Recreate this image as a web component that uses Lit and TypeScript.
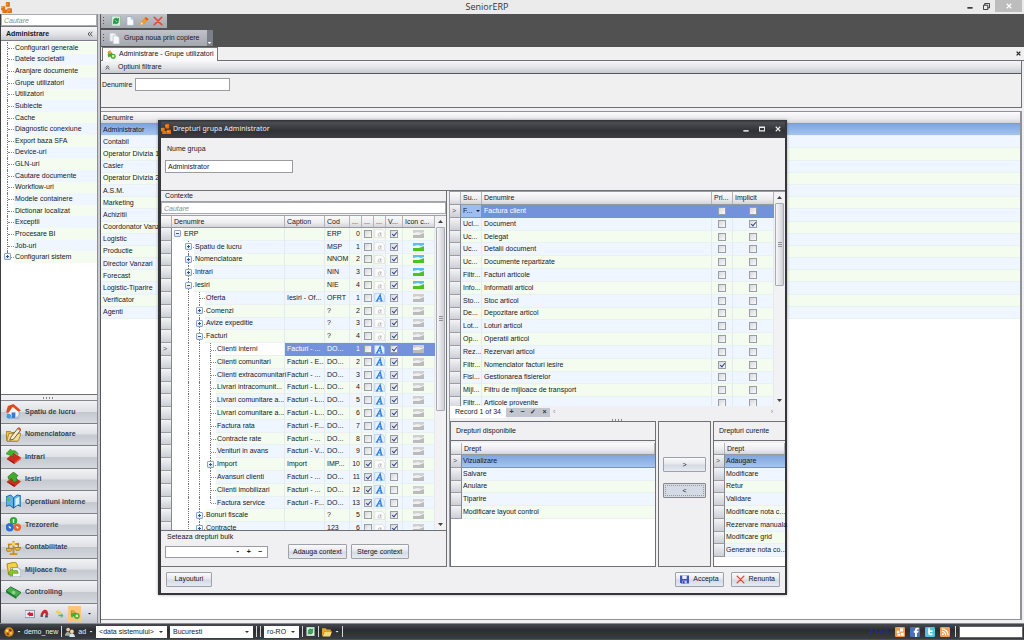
import { LitElement, html, svg, css, nothing } from "lit";
import { customElement } from "lit/decorators.js";
import { classMap } from "lit/directives/class-map.js";
import { styleMap } from "lit/directives/style-map.js";

const icon = (size: number, body: unknown, box = 16) =>
  html`<svg class="icon" width=${size} height=${size} viewBox="0 0 ${box} ${box}" aria-hidden="true">${body}</svg>`;

const ICONS: Record<string, unknown> = {
  brand: svg`<g fill="#e8720c"><rect x="7" y="0" width="6" height="7" rx="1"/><rect x="0" y="6" width="6" height="6" rx="1"/><rect x="9" y="9" width="7" height="7" rx="1"/><rect x="2" y="11" width="7" height="5" rx="1"/></g><path d="M7 3h3M0 8h3M10 12h3" stroke="#f9a750" stroke-width="1.5"/>`,
  refresh: svg`<rect x="1" y="0" width="14" height="16" rx="1" fill="#d9efe0" stroke="#8aa79a"/><path d="M4 7a4 4 0 0 1 7-2l1-2v5H8l1.500-1.500A2.500 2.500 0 0 0 6 7zM12 9a4 4 0 0 1-7 2l-1 2V8h4l-1.500 1.500A2.500 2.500 0 0 0 10 9z" fill="#1e9440" stroke="#1e9440"/>`,
  page: svg`<path d="M3 1h7l4 4v10H3z" fill="#fbfdff" stroke="#8ea3c0"/><path d="M10 1v4h4" fill="#cfe0f5" stroke="#8ea3c0"/>`,
  pages: svg`<path d="M1 0h7l3 3v9H1z" fill="#eef1f5" stroke="#b9bfc8"/><path d="M6 4h6l3 3v9H6z" fill="#f7f8fa" stroke="#b9bfc8"/>`,
  pencil: svg`<path d="M2 14l2-5 7-7 4 3-8 8z" fill="#f29a2e" stroke="#e08a24"/><path d="M2 14l2-5 3 4z" fill="#f7dfb8"/><path d="M11 2l4 3-2 2-4-3z" fill="#e3561c"/>`,
  cross: svg`<path d="M2 2l12 12M14 2L2 14" stroke="#e8452a" stroke-width="2.500" stroke-linecap="round"/>`,
  users: svg`<path d="M1 4c3-4 6-2 6 0l7 6c2 3-1 6-4 5L3 9z" fill="#39a431"/><circle cx="5" cy="4" r="3" fill="#e8a63c"/><circle cx="11" cy="11" r="4.500" fill="#3fae30"/><path d="M9 9h4v4H9z" fill="#dff0a8"/><path d="M1 7l4 1v5H2z" fill="#5aa82c"/>`,
  house: svg`<path d="M2 8l6-6 6 6v7H2z" fill="#f4f6fb" stroke="#8a9cc0"/><path d="M0 9l2-7 6-2 8 7-3 1-6-5-4 6z" fill="#d94a22"/><rect x="6" y="9" width="4" height="6" fill="#3b78c9"/><circle cx="3" cy="13" r="2.500" fill="#3f9fe0"/><path d="M9 15h6v-4z" fill="#b7c3dc"/>`,
  notes: svg`<path d="M0 5h5l1 1h8l-2 9H1z" fill="#efc55a" stroke="#9a7420"/><path d="M3 7h13l-3 8H1z" fill="#f9df8c" stroke="#a98732"/><path d="M5 11L13 1l3 2-8 10-4 1z" fill="#f7eccf" stroke="#5c5340"/><path d="M12 2l3 2 1-2-2-2z" fill="#e05a3a"/>`,
  inward: svg`<path d="M1 10l7-6 8 5-7 7z" fill="#cf2b1f"/><path d="M1 10l8 4v2L1 11z" fill="#8e1710"/><path d="M9 14l7-5v2l-7 5z" fill="#e25d3e"/><path d="M0 5l5-5 1 2c4-1 6 1 7 4-3-2-4-2-6-1l1 3z" fill="#45b72f" stroke="#1f7a17" stroke-width=".6"/>`,
  outward: svg`<path d="M1 10l7-5 8 5-7 6z" fill="#cf2b1f"/><path d="M1 10l8 4v2L1 11z" fill="#8e1710"/><path d="M2 5l6-5 5 4-2 1 1 5-4 1-2-4-3 1z" fill="#3faa2c" stroke="#1f6a17" stroke-width=".6"/>`,
  book: svg`<path d="M0 3l5-2 3 3 4-3 4 1v11l-4-1-4 3-4-3-4 1z" fill="#5fb2e4" stroke="#1b5f96"/><path d="M8 4v11" stroke="#1b5f96"/><path d="M10 5l4-2v7l-4 3z" fill="#d9f1fb"/><path d="M1 3l3 1v4L1 7z" fill="#56c13d"/>`,
  coins: svg`<circle cx="8" cy="4" r="4" fill="#3aa63a"/><circle cx="4" cy="11" r="4.500" fill="#2f6fd0"/><circle cx="12" cy="11" r="4" fill="#e8662a"/><path d="M8 2v4M3 10l2 2M11 10l2 2" stroke="#fff" stroke-width="1.500"/>`,
  scales: svg`<path d="M8 1v13M2 5l12-1M4 15h8" stroke="#c8901c" stroke-width="2"/><path d="M0 9h7l-2 3H1zM9 8h7l-2 3h-3z" fill="#eebc3f" stroke="#8c6410" stroke-width=".7"/><circle cx="8" cy="4" r="2" fill="#f6d65e"/><path d="M3 5v4M13 4v4" stroke="#8c6410"/>`,
  assets: svg`<path d="M1 2l9-2 2 3v9l-9 2z" fill="#f5d14c" stroke="#aa8412"/><path d="M5 6h8l3 3v7H5z" fill="#eef4fb" stroke="#8497ad"/><path d="M2 12l5-5v2h5l1 3H7v3z" fill="#8ac926" stroke="#4f7d10" stroke-width=".6"/>`,
  money: svg`<path d="M0 6l5-4 11 6-5 5z" fill="#48b04b" stroke="#1d6b29"/><path d="M0 6l11 7v2L0 8z" fill="#1d7a33"/><circle cx="8" cy="8" r="2" fill="#8fd488"/>`,
  exit: svg`<rect x="0" y="2" width="15" height="12" fill="#e8ecf4" stroke="#5b6c90"/><path d="M3 8l5-4v8zM8 6h5v5H8z" fill="#cc2434"/>`,
  magnet: svg`<path d="M1 9l4-6q4-3 8 0l2 7-4 2-2-5-2 1-3 5z" fill="#c9282c"/><path d="M9 11h5v4H9zM1 10h4v4H1z" fill="#42526e"/>`,
  swap: svg`<path d="M1 5l5-4v3h4v5H5z" fill="#f0d23a"/><path d="M6 10h5V7l4 5-4 4v-3H6z" fill="#57b947"/>`,
  palette: svg`<circle cx="8" cy="8" r="7.500" fill="#d58a1c"/><circle cx="5" cy="6" r="2" fill="#ffe37a"/><circle cx="10" cy="5" r="2" fill="#7a3c08"/><circle cx="11" cy="10" r="2" fill="#f7c34a"/><circle cx="6" cy="11" r="2" fill="#8c4a10"/>`,
  people: svg`<circle cx="5" cy="4" r="3" fill="#e9c9a0"/><path d="M0 14c0-8 9-8 10 0z" fill="#9db2a0"/><circle cx="11" cy="7" r="3" fill="#f4d8a6"/><path d="M7 16c0-8 8-8 9 0z" fill="#dfe4ea"/>`,
  folder: svg`<path d="M0 2h6l2 2h6v3H4L1 14H0z" fill="#e0a52c"/><path d="M4 7h12l-3 8H1z" fill="#fbd672"/>`,
  save: svg`<path d="M0 1h16v14H2l-2-2z" fill="#4453b8"/><rect x="4" y="1" width="8" height="6" fill="#eef1ff"/><rect x="4" y="10" width="8" height="5" fill="#c3cbf2"/><rect x="5" y="11" width="3" height="4" fill="#313c93"/>`,
  facebook: svg`<rect width="16" height="16" rx="2" fill="#4a70b8"/><path d="M8 16V9H6V6h2V4q0-3 3-3h3v3h-2q-1 0-1 1v1h3l-1 3h-2v7z" fill="#fff"/>`,
  twitter: svg`<rect width="16" height="16" rx="2" fill="#4cc3df"/><path d="M5 2v8q0 3 3 3h4v-3H8V8h4V5H8V2z" fill="#fff"/>`,
  rss: svg`<rect width="16" height="16" rx="2" fill="#f2a052"/><circle cx="4.500" cy="11.500" r="1.500" fill="#fff"/><path d="M3 7a6 6 0 0 1 6 6M3 3a10 10 0 0 1 10 10" fill="none" stroke="#fff" stroke-width="2"/>`,
  senior: svg`<rect width="16" height="16" rx="2" fill="#f39a4a"/><path d="M8 2h5v5H8zM3 6h4v4H3zM9 9h5v5H9zM4 11h4v3H4z" fill="#fff"/>`,
};

const SECTIONS = [
  "Configurari generale", "Datele societatii", "Aranjare documente", "Grupe utilizatori", "Utilizatori",
  "Subiecte", "Cache", "Diagnostic conexiune", "Export baza SFA", "Device-uri", "GLN-uri",
  "Cautare documente", "Workflow-uri", "Modele containere", "Dictionar localizat", "Exceptii",
  "Procesare BI", "Job-uri", "Configurari sistem",
];

const MODULES: [string, string][] = [
  ["house", "Spatiu de lucru"], ["notes", "Nomenclatoare"], ["inward", "Intrari"], ["outward", "Iesiri"],
  ["book", "Operatiuni interne"], ["coins", "Trezorerie"], ["scales", "Contabilitate"],
  ["assets", "Mijloace fixe"], ["money", "Controlling"],
];

const GROUPS = [
  "Administrator", "Contabil", "Operator Divizia 1", "Casier", "Operator Divizia 2", "A.S.M.", "Marketing",
  "Achizitii", "Coordonator Vanzari", "Logistic", "Productie", "Director Vanzari", "Forecast",
  "Logistic-Tiparire", "Verificator", "Agenti",
];

interface Ctx {
  level: number; kind: "plus" | "minus" | "leaf" | "last"; name: string; caption: string; code: string;
  order: number; bulk?: boolean; form?: boolean; visible?: boolean; picture?: boolean;
}
const c = (
  level: number, kind: Ctx["kind"], name: string, caption: string, code: string, order: number, extra: Partial<Ctx> = {},
): Ctx => ({ level, kind, name, caption, code, order, visible: true, ...extra });
const F = { form: true };
const BF = { bulk: true, form: true, visible: false };
const P = { picture: true };

const CONTEXTS: Ctx[] = [
  c(0, "minus", "ERP", "", "ERP", 0),
  c(1, "plus", "Spatiu de lucru", "", "MSP", 1, P),
  c(1, "plus", "Nomenclatoare", "", "NNOM", 2, P),
  c(1, "plus", "Intrari", "", "NIN", 3, P),
  c(1, "minus", "Iesiri", "", "NIE", 4, P),
  c(2, "leaf", "Oferta", "Iesiri - Of...", "OFRT", 1, F),
  c(2, "plus", "Comenzi", "", "?", 2),
  c(2, "plus", "Avize expeditie", "", "?", 3),
  c(2, "minus", "Facturi", "", "?", 4),
  c(3, "leaf", "Clienti interni", "Facturi - ...", "DO...", 1, F),
  c(3, "leaf", "Clienti comunitari", "Facturi - E...", "DO...", 2, F),
  c(3, "leaf", "Clienti extracomunitari", "Facturi - ...", "DO...", 3, F),
  c(3, "leaf", "Livrari intracomunit...", "Facturi - L...", "DO...", 4, F),
  c(3, "leaf", "Livrari comunitare a...", "Facturi - L...", "DO...", 5, F),
  c(3, "leaf", "Livrari comunitare a...", "Facturi - L...", "DO...", 6, F),
  c(3, "leaf", "Factura rata", "Facturi - F...", "DO...", 7, F),
  c(3, "leaf", "Contracte rate", "Facturi - ...", "DO...", 8, F),
  c(3, "leaf", "Venituri in avans", "Facturi - V...", "DO...", 9, F),
  c(3, "plus", "Import", "Import", "IMP...", 10, { bulk: true }),
  c(3, "leaf", "Avansuri clienti", "Facturi - ...", "DO...", 11, BF),
  c(3, "leaf", "Clienti imobilizari", "Facturi - ...", "DO...", 12, BF),
  c(3, "last", "Factura service", "Facturi - F...", "DO...", 13, BF),
  c(2, "plus", "Bonuri fiscale", "", "?", 5),
  c(2, "plus", "Contracte", "", "123", 6),
];
const SELECTED_CONTEXT = 9;

const SUBJECTS: [string, string][] = [
  ["F...", "Factura client"], ["Ucl...", "Document"], ["Uc...", "Delegat"], ["Uc...", "Detalii document"],
  ["Uc...", "Documente repartizate"], ["Filtr...", "Facturi articole"], ["Info...", "Informatii articol"],
  ["Sto...", "Stoc articol"], ["De...", "Depozitare articol"], ["Lot...", "Loturi articol"],
  ["Op...", "Operatii articol"], ["Rez...", "Rezervari articol"], ["Filtr...", "Nomenclator facturi iesire"],
  ["Fisi...", "Gestionarea fisierelor"], ["Mijl...", "Filtru de mijloace de transport"],
  ["Filtr...", "Articole provenite"],
];

const AVAILABLE = ["Vizualizare", "Salvare", "Anulare", "Tiparire", "Modificare layout control"];
const CURRENT = [
  "Adaugare", "Modificare", "Retur", "Validare", "Modificare nota c...", "Rezervare manuala",
  "Modificare grid", "Generare nota co...",
];

@customElement("app-root")
export class AppRoot extends LitElement {
  static styles = css`
    :host {
      display: flex;
      flex-direction: column;
      position: relative;
      height: 100vh;
      overflow: hidden;
      background: #ebebeb;
      color: #16161e;
      font: 7px/10px "Liberation Sans", Arial, sans-serif;
      --bar: linear-gradient(#f6f6f8, #e2e3e7 55%, #c6c9cf);
      --head: linear-gradient(#fbfbfc, #ececef 60%, #d3d4d9);
      --line: #6e7076;
      --green: #f4fcf0;
      --blue: #f0f6ff;
      --pick: linear-gradient(#7fa5de, #a5c4ef);
    }
    * { box-sizing: border-box; }
    button, input, select { font: inherit; color: inherit; margin: 0; padding: 0; border-radius: 0; }
    button { border: 0; background: none; display: flex; align-items: center; white-space: nowrap; }
    ul { list-style: none; margin: 0; padding: 0; }
    .icon { display: block; flex: none; }
    .grow { flex: 1; min-width: 0; }

    .titlebar { display: flex; align-items: center; height: 14px; flex: none; padding-left: 1px; }
    .titlebar h1 { flex: 1; margin: 0; text-align: center; font: 9px/14px "Open Sans", sans-serif; color: #333; }
    .winbtns { display: flex; height: 12px; align-self: flex-start; margin-right: 2px; }
    .winbtns button { width: 16px; justify-content: center; }
    .winbtns .close { width: 27px; background: #bdbdbd; color: #fff; margin-left: 1px; }

    .workspace { flex: 1; min-height: 0; display: grid; grid-template-columns: 98px minmax(0, 1fr); gap: 2px; background: #c9cbd0; }
    .sidebar { display: flex; flex-direction: column; min-height: 0; border-left: 1px solid #3c3e42; border-right: 1px solid #8c8f96; background: #f0f0f2; }
    .search { width: 100%; height: 12px; border: 1px solid #a9abb0; background: #fff; padding: 0 2px; font-style: italic; }
    .search::placeholder { color: #8c8c8c; opacity: 1; }
    .side-head { display: flex; align-items: center; height: 15px; padding: 0 4px 0 5px; background: var(--bar); border: solid #7a7c82; border-width: 1px 0; }
    .side-head h2 { flex: 1; margin: 0; font: bold 7px/12px "Liberation Sans", sans-serif; }
    .side-body { flex: 1; min-height: 0; background: #fff; border-bottom: 1px solid var(--line); padding-top: 1px; }
    .side-tree { display: grid; grid-auto-rows: 1fr; height: 221px; }
    .side-tree li { display: flex; align-items: center; }
    .side-tree a { flex: 1; color: inherit; text-decoration: none; white-space: nowrap; padding-left: 1px; align-self: stretch; display: flex; align-items: center; background: var(--green); }
    .side-tree li:nth-child(even) a { background: var(--blue); }
    .grip { display: flex; justify-content: center; align-items: center; height: 5px; flex: none; }
    .grip::before { content: ""; width: 12px; height: 2px; background: repeating-linear-gradient(90deg, #83868d 0 1px, transparent 1px 3px); }
    .right .grip { height: 3px; }
    .modules { display: grid; grid-auto-rows: 1fr; height: 204px; flex: none; border-top: 1px solid #84878d; }
    .modules button { width: 100%; height: 100%; gap: 4px; padding-left: 5px; font-weight: bold; color: #3a4050; background: linear-gradient(#f1f2f4, #dfe1e5 48%, #c5c9d0 52%, #d5d8dd); border-bottom: 1px solid #7d8087; }
    .side-foot { display: flex; align-items: center; justify-content: flex-end; gap: 2px; height: 19px; flex: none; padding-right: 1px; background: linear-gradient(#eff0f3, #c3c7ce); }
    .side-foot button { width: 13px; height: 16px; justify-content: center; }
    .side-foot .on { background: #fbc77c; }

    .twig { position: relative; flex: none; width: 11px; align-self: stretch; }
    .twig.v::before { content: ""; position: absolute; left: 5px; top: 0; bottom: 0; border-left: 1px dotted #777; }
    .twig.end::before { bottom: 50%; }
    .twig.h::after { content: ""; position: absolute; left: 6px; right: 0; top: 50%; border-top: 1px dotted #888; }
    .side-tree .twig { width: 13px; }
    .side-tree .twig::before { left: 6px; }
    .side-tree .twig::after { left: 7px; }
    .box { position: absolute; z-index: 1; left: 2px; top: calc(50% - 4px); width: 7px; height: 7px; border: 1px solid #8aa6cf; border-radius: 1px; background: linear-gradient(#fff, #d8e3f2); }
    .box::before, .box.plus::after { content: ""; position: absolute; left: 1px; top: 2px; width: 3px; height: 1px; background: #3b5680; }
    .box.plus::after { left: 2px; top: 1px; width: 1px; height: 3px; }
    .side-tree .box { left: 3px; }

    .main { display: flex; flex-direction: column; min-width: 0; min-height: 0; border-left: 1px solid #55575b; background: #f0f0f0; }
    .toolbars { height: 33px; flex: none; background: #515151; display: flex; flex-direction: column; gap: 2px; align-items: flex-start; }
    .toolbar { display: flex; align-items: center; height: 14px; background: linear-gradient(#c0c3c9, #a3a7ae); padding: 0 2px; }
    .toolbar::before { content: ""; width: 1px; height: 9px; margin-right: 5px; background: repeating-linear-gradient(#55585e 0 1px, transparent 1px 3px); }
    .toolbar button { width: 14px; justify-content: center; }
    .toolbar.wide { height: 16px; padding-right: 0; }
    .toolbar.wide button { width: auto; gap: 4px; padding-right: 7px; }
    .toolbar .more { align-self: stretch; width: 6px; background: #7b7f87; color: #fff; display: flex; align-items: flex-end; justify-content: center; padding-bottom: 2px; }
    .tabs { display: flex; align-items: center; height: 14px; flex: none; border-bottom: 1px solid var(--line); padding: 0 3px 0 1px; }
    .tab { height: 14px; gap: 3px; padding: 0 3px 0 4px; background: #fafafa; border: 1px solid #777; border-bottom: 0; }
    .filters { flex: none; margin-right: 2px; border-right: 1px solid var(--line); }
    .filters h3 { display: flex; align-items: center; gap: 8px; margin: 0; padding-left: 4px; height: 13px; font: inherit; background: var(--bar); border-bottom: 1px solid #55575b; }
    .filters form { display: flex; align-items: flex-start; gap: 3px; padding: 4px 1px; height: 34px; border-bottom: 1px solid var(--line); }
    .filters label { line-height: 13px; }
    .field { height: 13px; border: 1px solid #9a9ca1; background: #fff; padding: 0 2px; }
    .filters .field { width: 95px; }
    .groups { flex: 1; min-height: 0; display: flex; flex-direction: column; margin: 3px 2px 3px 0; background: #fff; border: solid #909298; border-width: 1px 2px 1px 0; }
    table, thead, tbody { display: block; }
    tr { display: grid; }
    th { font-weight: normal; text-align: left; }
    th, td { padding: 0 0 0 2px; min-width: 0; overflow: hidden; white-space: nowrap; display: flex; align-items: center; }
    thead tr { height: 12px; background: var(--head); border-bottom: 1px solid #97999f; }
    thead th { border-right: 1px solid #b2b4b9; }
    tbody { display: grid; grid-auto-rows: 1fr; }
    tbody tr:nth-child(odd) { --row: var(--green); }
    tbody tr:nth-child(even) { --row: var(--blue); }
    tbody td { background: var(--row); border-right: 1px solid #e3ebf0; border-bottom: 1px solid #e9f1f2; }
    .groups tbody { height: 195px; }
    .groups th, .groups td { border-right: 0; }
    .groups tbody tr:first-child td { background: var(--pick); }

    .status { display: flex; align-items: center; height: 17px; flex: none; padding: 0 1px 0 4px; background: linear-gradient(#45494f, #2b2d31 40%, #3a3c40); color: #f2f2f2; border-bottom: 1px solid #35577f; border-top: 1px solid #8b8d91; gap: 3px; }
    .status select { appearance: none; width: 100%; height: 12px; background: #fff; color: #222; border: 1px solid #fff; padding: 0 2px; }
    .drop { position: relative; height: 12px; }
    .drop.date { width: 71px; }
    .drop.city { width: 83px; }
    .drop.lang { width: 35px; }
    .drop::after { content: ""; position: absolute; right: 4px; top: 5px; border: 2px solid transparent; border-top-color: #333; border-bottom: 0; pointer-events: none; }
    .caret { width: 4px; height: 2px; background: currentColor; clip-path: polygon(0 0, 100% 0, 50% 100%); flex: none; }
    .sep { width: 1px; height: 11px; background: #d5d5d5; flex: none; }
    .status button { gap: 3px; }
    .status .social { display: flex; gap: 5px; padding: 0 2px 0 3px; }
    .status .version { color: #1f1fe8; }
    .status .note { width: 64px; height: 12px; background: #fff; border: 1px solid #666; }

    .dialog { position: absolute; z-index: 5; left: 158px; top: 120px; width: 629px; height: 475px; display: flex; flex-direction: column; background: #f0f0f2; border: solid #34363a; border-width: 0 2px 2px 3px; box-shadow: 0 0 3px #0005; }
    .dlg-title { display: flex; align-items: center; gap: 2px; height: 18px; flex: none; color: #f0f0f0; background: linear-gradient(#2d2f33, #4a4d52 15%, #2f3135 60%, #3d3f44); }
    .dlg-title h2 { flex: 1; margin: 0; font: 7px/12px "Noto Sans", sans-serif; }
    .dlg-title button { width: 14px; justify-content: center; }
    .dlg-top { height: 53px; flex: none; display: flex; flex-direction: column; gap: 6px; align-items: flex-start; padding: 6px 4px; border-bottom: 1px solid var(--line); }
    .dlg-top label { padding-left: 2px; }
    .dlg-top .field { width: 128px; }
    .dlg-mid { flex: 1; min-height: 0; display: grid; grid-template-columns: 286px minmax(0, 1fr); gap: 2px; }
    .left { display: flex; flex-direction: column; min-height: 0; border-right: 1px solid var(--line); }
    .left h3 { margin: 0; font: inherit; height: 11px; padding-left: 4px; border-bottom: 1px solid #a0a2a7; }
    .scroller { flex: 1; min-height: 0; display: flex; overflow: hidden; margin-top: 1px; border-top: 1px solid #a0a2a7; }
    .scroller table { flex: 1; min-width: 0; height: 100%; overflow: hidden; background: #fff; }
    .scroll { width: 11px; flex: none; display: flex; flex-direction: column; align-items: center; justify-content: space-between; background: #f2f2f4; padding: 4px 1px; }
    .thumb { align-self: stretch; margin: 4px 0 auto; border: 1px solid #a8abb0; border-radius: 1px; background: linear-gradient(90deg, #f7f7f9, #cfd1d7); display: grid; place-items: center; }
    .thumb::before { content: ""; width: 4px; height: 5px; background: repeating-linear-gradient(#8f9298 0 1px, transparent 1px 2px); }
    .arrow { width: 5px; height: 3px; background: #444; clip-path: polygon(0 0, 100% 0, 50% 100%); }
    .arrow.up { clip-path: polygon(50% 0, 100% 100%, 0 100%); }
    .ctx tr { grid-template-columns: 11px minmax(0, 1fr) 40px 25px 12px 12px 12px 17px 32px; }
    .ctx tbody { height: 307px; }
    .ctx td.name { background: none; padding: 0; border-bottom: 0; overflow: visible; position: relative; z-index: 1; }
    .ctx .label { flex: 1; min-width: 0; align-self: stretch; display: flex; align-items: center; padding-left: 1px; background: var(--row); border-bottom: 1px solid #e9f1f2; }
    .ctx .num { justify-content: flex-end; padding: 0 1px 0 0; }
    .mid { justify-content: center; padding: 0; }
    td.ind { background: linear-gradient(#f4f4f6, #cdcfd5); border-right: 1px solid #85888e; border-bottom: 1px solid #9b9da3; color: #555; }
    tr.sel td:not(.ind):not(.name) { background: #7491dc; color: #fff; border-color: #7491dc; }
    tr.sel .label { background: #fff; }
    .check { appearance: none; position: relative; width: 8px; height: 8px; flex: none; border: 1px solid #9a9da5; background: linear-gradient(135deg, #d6d8dd, #fafafa); }
    .check:checked::after { content: ""; position: absolute; left: 2px; top: 0; width: 2px; height: 4px; border: solid #33458a; border-width: 0 1px 1px 0; transform: rotate(40deg); }
    .bulk { height: 37px; flex: none; padding: 1px 4px; border: solid var(--line); border-width: 1px 0; display: flex; flex-direction: column; gap: 2px; }
    .bulk label { padding-left: 2px; }
    .bulk-row { display: flex; align-items: center; gap: 4px; }
    .bulk-edit { display: flex; align-items: center; gap: 7px; width: 103px; height: 12px; margin-right: 16px; padding-right: 5px; background: #fff; border: 1px solid #9a9ca1; }
    .bulk-edit input { flex: 1; min-width: 0; border: 0; background: none; height: 9px; }
    .btn { justify-content: center; gap: 4px; height: 15px; min-width: 46px; padding: 0 4px; border: 1px solid #9da1a9; border-radius: 1px; background: linear-gradient(#fafafb, #e6e8ec 48%, #d3d9e3 52%, #e6ebf1); }
    .bulk-row .btn { min-width: 58px; }
    .right { display: flex; flex-direction: column; min-width: 0; min-height: 0; border-left: 1px solid #999ca2; }
    .subjects { flex: none; height: 215px; display: flex; overflow: hidden; border-top: 1px solid #999ca2; }
    .subjects table { flex: 1; min-width: 0; overflow: hidden; }
    .subjects tr { grid-template-columns: 11px 21px minmax(0, 1fr) 21px 41px; }
    .subjects thead tr { height: 13px; }
    .subjects tbody { height: 205px; }
    .subjects tr.sel td:nth-child(2) { background: #9fbdf0; color: #222; justify-content: space-between; padding-right: 1px; }
    .records { display: flex; align-items: center; height: 12px; flex: none; padding-right: 12px; color: #888; }
    .records span { background: #fff; color: #222; height: 12px; line-height: 12px; padding: 0 5px; }
    .records .nav { display: flex; background: #c2c6cf; height: 9px; color: #333; margin-right: 3px; }
    .records .nav button { width: 11px; justify-content: center; font-weight: bold; }
    .rights { flex: 1; min-height: 0; display: grid; grid-template-columns: 206px 53px minmax(0, 1fr); column-gap: 2px; }
    .pane { display: flex; flex-direction: column; min-width: 0; border: 1px solid var(--line); background: #fff; }
    .pane:last-child { border-right: 0; }
    .pane h3 { margin: 0 0 2px; font: inherit; padding-left: 5px; height: 19px; line-height: 18px; background: #f0f0f2; border-bottom: 1px solid var(--line); box-shadow: 0 2px #f0f0f2; }
    .pane tr { grid-template-columns: 11px minmax(0, 1fr); }
    .pane td:last-child { padding-left: 1px; border-right: 0; overflow: visible; }
    .pane tr.sel td:not(.ind) { background: var(--pick); color: inherit; }
    .moves { border: 1px solid var(--line); padding: 35px 4px 0; display: flex; flex-direction: column; gap: 11px; }
    .moves .btn { width: 100%; min-width: 0; }
    .moves .focus { background: #d5dbe6; outline: 1px dotted #999; outline-offset: -3px; border-color: #888; }
    .dlg-foot { display: flex; align-items: center; gap: 7px; height: 26px; flex: none; padding: 0 5px 2px; }
  `;

  private check(label: string, on = false) {
    return html`<input class="check" type="checkbox" aria-label=${label} .checked=${on} />`;
  }

  private letter(on = false) {
    const ink = on ? "#2f7fd6" : "#bdbdbd";
    return icon(11, svg`
      <path d="M1 2h11l3 3v9H1z" fill=${on ? "#e6f2ff" : "#fdfdfd"} stroke=${on ? "#9cc6f2" : "#d8d8d8"}/>
      ${on
        ? svg`<path d="M4 13L9 4l2 9M6 10h4.500M3 13h3M9 13h3.500" fill="none" stroke=${ink} stroke-width="1.800"/>`
        : svg`<path d="M10 7c-4-1-5 5-3 5s3-2 3-5c0 4-1 5 1 5" fill="none" stroke=${ink} stroke-width="1.400"/>`}`);
  }

  private picture(on = false) {
    return html`<svg class="icon" width="11" height="8" viewBox="0 0 11 8" aria-hidden="true">
      <rect width="11" height="8" fill=${on ? "#58bdf2" : "#cfcfcf"} />
      <path d="M0 3l5-1 3 1 3-1v3H0z" fill=${on ? "#e9f8fd" : "#f0f0f0"} />
      <path d="M0 5l6 0 5-2v5H0z" fill=${on ? "#4cc31e" : "#bbbbbb"} />
    </svg>`;
  }

  private twigs(row: Ctx) {
    const out = [];
    for (let i = 1; i < row.level; i++) out.push(html`<span class="twig v"></span>`);
    const own = { twig: true, v: row.level > 0, h: row.level > 0, end: row.kind === "last" };
    const boxed = row.kind === "plus" || row.kind === "minus";
    return html`${row.level > 0 ? html`<span class="twig"></span>` : nothing}${out}<span class=${classMap(own)}>
      ${boxed ? html`<i class="box ${row.kind}"></i>` : nothing}</span>`;
  }

  private scrollbar(size: string) {
    return html`<div class="scroll">
      <i class="arrow up"></i><i class="thumb" style=${styleMap({ height: size })}></i><i class="arrow"></i>
    </div>`;
  }

  private rightsTable(rows: string[]) {
    return html`<table>
      <thead><tr><th></th><th>Drept</th></tr></thead>
      <tbody style=${styleMap({ height: `${Math.round((rows.length * 64) / 5)}px` })}>
        ${rows.map((r, i) => html`<tr class=${i === 0 ? "sel" : ""}><td class="ind">${i === 0 ? ">" : ""}</td><td>${r}</td></tr>`)}
      </tbody>
    </table>`;
  }

  private sidebar() {
    return html`<aside class="sidebar">
      <input class="search" placeholder="Cautare" aria-label="Cautare" />
      <div class="side-head"><h2>Administrare</h2>${icon(6, svg`<path d="M8 2L3 8l5 6M14 2L9 8l5 6" fill="none" stroke="#444" stroke-width="2.500"/>`)}</div>
      <div class="side-body">
        <ul class="side-tree">
          ${SECTIONS.map((s, i) => html`<li>
            <span class="twig v h ${i === SECTIONS.length - 1 ? "end" : ""}">
              ${i === SECTIONS.length - 1 ? html`<i class="box plus"></i>` : nothing}
            </span><a href="#">${s}</a></li>`)}
        </ul>
      </div>
      <div class="grip"></div>
      <ul class="modules">
        ${MODULES.map(([id, name]) => html`<li><button>${icon(15, ICONS[id])}${name}</button></li>`)}
      </ul>
      <div class="side-foot">
        <button aria-label="Iesire">${icon(10, ICONS.exit)}</button>
        <button aria-label="Magnet">${icon(9, ICONS.magnet)}</button>
        <button aria-label="Schimb">${icon(9, ICONS.swap)}</button>
        <button class="on" aria-label="Administrare">${icon(10, ICONS.users)}</button>
        <button aria-label="Mai multe"><i class="caret"></i></button>
      </div>
    </aside>`;
  }

  private main() {
    return html`<main class="main">
      <div class="toolbars">
        <div class="toolbar">
          ${["refresh", "page", "pencil", "cross"].map((n) => html`<button aria-label=${n}>${icon(10, ICONS[n])}</button>`)}
        </div>
        <div class="toolbar wide">
          <button>${icon(11, ICONS.pages)}Grupa noua prin copiere</button><span class="more"><i class="caret"></i></span>
        </div>
      </div>
      <div class="tabs">
        <button class="tab">${icon(9, ICONS.users)}Administrare - Grupe utilizatori</button>
        <span class="grow"></span>
        <button aria-label="Inchide">${icon(5, svg`<path d="M2 2l12 12M14 2L2 14" stroke="#222" stroke-width="4"/>`)}</button>
      </div>
      <section class="filters">
        <h3>${icon(5, svg`<path d="M2 8l6-5 6 5M2 14l6-5 6 5" fill="none" stroke="#333" stroke-width="2.500"/>`)}Optiuni filtrare</h3>
        <form><label for="den">Denumire</label><input id="den" class="field" /></form>
      </section>
      <section class="groups">
        <table>
          <thead><tr><th>Denumire</th></tr></thead>
          <tbody>${GROUPS.map((g) => html`<tr><td>${g}</td></tr>`)}</tbody>
        </table>
      </section>
    </main>`;
  }

  private contexts() {
    return html`<section class="left">
      <h3>Contexte</h3>
      <input class="search" placeholder="Cautare" aria-label="Cautare context" />
      <div class="scroller">
        <table class="ctx">
          <thead><tr>
            <th></th><th>Denumire</th><th>Caption</th><th>Cod</th><th>...</th><th>...</th><th>...</th><th>V...</th><th>Icon c...</th>
          </tr></thead>
          <tbody>
            ${CONTEXTS.map((r, i) => html`<tr class=${i === SELECTED_CONTEXT ? "sel" : ""}>
              <td class="ind">${i === SELECTED_CONTEXT ? ">" : ""}</td>
              <td class="name">${this.twigs(r)}<span class="label">${r.name}</span></td>
              <td>${r.caption}</td><td>${r.code}</td><td class="num">${r.order}</td>
              <td class="mid">${this.check("Bulk " + r.name, r.bulk)}</td>
              <td class="mid">${this.letter(r.form)}</td>
              <td class="mid">${this.check("Vizibil " + r.name, r.visible)}</td>
              <td class="mid">${this.picture(r.picture)}</td>
            </tr>`)}
          </tbody>
        </table>
        ${this.scrollbar("60%")}
      </div>
      <div class="bulk">
        <label for="bulk">Seteaza drepturi bulk</label>
        <div class="bulk-row">
          <span class="bulk-edit"><input id="bulk" /><i class="caret"></i><b>+</b><b>−</b></span>
          <button class="btn">Adauga context</button><button class="btn">Sterge context</button>
        </div>
      </div>
    </section>`;
  }

  private subjects() {
    return html`<section class="right">
      <div class="subjects">
        <table>
          <thead><tr><th></th><th>Su...</th><th>Denumire</th><th>Pri...</th><th>Implicit</th></tr></thead>
          <tbody>
            ${SUBJECTS.map(([s, d], i) => html`<tr class=${i === 0 ? "sel" : ""}>
              <td class="ind">${i === 0 ? ">" : ""}</td>
              <td>${s}${i === 0 ? html`<i class="caret"></i>` : nothing}</td><td>${d}</td>
              <td class="mid">${this.check("Principal " + d, i === 12)}</td>
              <td class="mid">${this.check("Implicit " + d, i === 1)}</td>
            </tr>`)}
          </tbody>
        </table>
        ${this.scrollbar("83px")}
      </div>
      <div class="records">
        <span>Record 1 of 34</span>
        <div class="nav"><button>+</button><button>−</button><button>✓</button><button>×</button></div>
        ‹<i class="grow"></i>›
      </div>
      <div class="grip"></div>
      <div class="rights">
        <div class="pane"><h3>Drepturi disponibile</h3>${this.rightsTable(AVAILABLE)}</div>
        <div class="moves"><button class="btn">&gt;</button><button class="btn focus">&lt;</button></div>
        <div class="pane"><h3>Drepturi curente</h3>${this.rightsTable(CURRENT)}</div>
      </div>
    </section>`;
  }

  private dialog() {
    return html`<section class="dialog" role="dialog" aria-label="Drepturi grupa Administrator">
      <header class="dlg-title">
        ${icon(10, ICONS.brand)}<h2>Drepturi grupa Administrator</h2>
        <button aria-label="Minimizeaza">${icon(6, svg`<path d="M1 13h14" stroke="#eee" stroke-width="4"/>`)}</button>
        <button aria-label="Maximizeaza">${icon(6, svg`<path d="M1 3h14v10H1zM1 4h14" fill="none" stroke="#eee" stroke-width="3"/>`)}</button>
        <button aria-label="Inchide">${icon(6, svg`<path d="M2 2l12 12M14 2L2 14" stroke="#eee" stroke-width="3"/>`)}</button>
      </header>
      <div class="dlg-top">
        <label for="nume">Nume grupa</label><input id="nume" class="field" value="Administrator" />
      </div>
      <div class="dlg-mid">${this.contexts()}${this.subjects()}</div>
      <footer class="dlg-foot">
        <button class="btn">Layouturi</button><span class="grow"></span>
        <button class="btn">${icon(9, ICONS.save)}Accepta</button>
        <button class="btn">${icon(9, ICONS.cross)}Renunta</button>
      </footer>
    </section>`;
  }

  render() {
    return html`
      <header class="titlebar">
        ${icon(11, ICONS.brand)}<h1>SeniorERP</h1>
        <div class="winbtns">
          <button aria-label="Minimizeaza">${icon(6, svg`<path d="M1 13h14" stroke="#222" stroke-width="4"/>`)}</button>
          <button aria-label="Restaureaza">${icon(7, svg`<path d="M1 5h10v10H1zM4 5V1h11v10h-4" fill="none" stroke="#222" stroke-width="2"/>`)}</button>
          <button class="close" aria-label="Inchide">${icon(6, svg`<path d="M2 2l12 12M14 2L2 14" stroke="#fff" stroke-width="3"/>`)}</button>
        </div>
      </header>
      <div class="workspace">${this.sidebar()}${this.main()}</div>
      <footer class="status">
        <button>${icon(10, ICONS.palette)}<i class="caret"></i></button>
        <span>demo_new</span><i class="sep"></i>
        <button>${icon(10, ICONS.people)}ad<i class="caret"></i></button>
        <span class="drop date"><select aria-label="Data"><option>&lt;data sistemului&gt;</option></select></span>
        <span class="drop city"><select aria-label="Punct de lucru"><option>Bucuresti</option></select></span>
        <i class="sep"></i><i class="sep"></i>
        <span class="drop lang"><select aria-label="Limba"><option>ro-RO</option></select></span>
        <i class="sep"></i><button aria-label="Reincarca">${icon(9, ICONS.refresh)}</button><i class="sep"></i>
        <button aria-label="Dosar">${icon(10, ICONS.folder)}<i class="caret"></i></button><i class="sep"></i>
        <span class="grow"></span>
        <a class="version" href="#">2.12.0</a>
        <span class="social">${["senior", "facebook", "twitter", "rss"].map((n) => icon(10, ICONS[n]))}</span>
        <i class="sep"></i><input class="note" aria-label="Mesaj" />
      </footer>
      ${this.dialog()}
    `;
  }
}
